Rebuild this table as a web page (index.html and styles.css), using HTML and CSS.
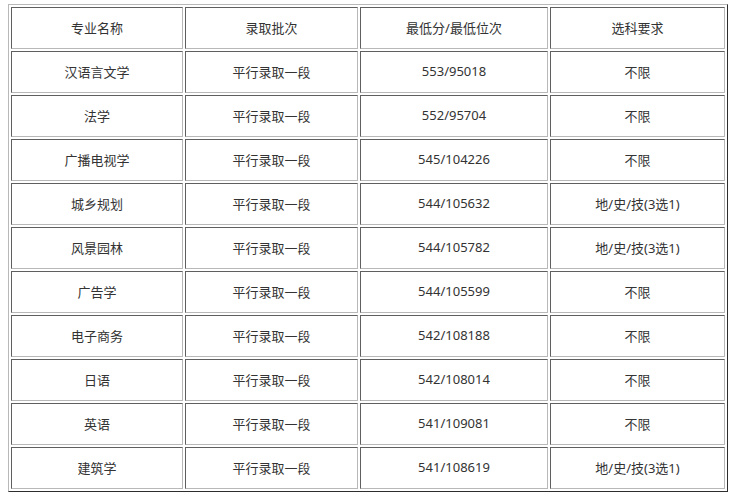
FILE: index.html
```html
<!DOCTYPE html>
<html lang="zh">
<head>
<meta charset="utf-8">
<link rel="stylesheet" href="styles.css">
</head>
<body>
<table class="grid">
  <colgroup>
    <col class="c1"><col class="c2"><col class="c3"><col class="c4">
  </colgroup>
  <tr><td>专业名称</td><td>录取批次</td><td>最低分/最低位次</td><td>选科要求</td></tr>
  <tr><td>汉语言文学</td><td>平行录取一段</td><td>553/95018</td><td>不限</td></tr>
  <tr><td>法学</td><td>平行录取一段</td><td>552/95704</td><td>不限</td></tr>
  <tr><td>广播电视学</td><td>平行录取一段</td><td>545/104226</td><td>不限</td></tr>
  <tr><td>城乡规划</td><td>平行录取一段</td><td>544/105632</td><td>地/史/技(3选1)</td></tr>
  <tr><td>风景园林</td><td>平行录取一段</td><td>544/105782</td><td>地/史/技(3选1)</td></tr>
  <tr><td>广告学</td><td>平行录取一段</td><td>544/105599</td><td>不限</td></tr>
  <tr><td>电子商务</td><td>平行录取一段</td><td>542/108188</td><td>不限</td></tr>
  <tr><td>日语</td><td>平行录取一段</td><td>542/108014</td><td>不限</td></tr>
  <tr><td>英语</td><td>平行录取一段</td><td>541/109081</td><td>不限</td></tr>
  <tr><td>建筑学</td><td>平行录取一段</td><td>541/108619</td><td>地/史/技(3选1)</td></tr>
</table>
</body>
</html>
```
FILE: styles.css
```css
html, body {
  background: #ffffff;
}
body {
  margin: 4px 8px;
  font-family: "Noto Sans", "Noto Sans CJK SC", sans-serif;
  font-size: 13px;
  color: #333333;
}
.grid {
  width: 720px;
  table-layout: fixed;
  border-collapse: separate;
  border-spacing: 2px;
  border-style: solid;
  border-width: 1px;
  border-color: #b8b8b8 #2e2e2e #2e2e2e #b8b8b8;
}
.c1 { width: 172px; }
.c2 { width: 173px; }
.c3 { width: 188px; }
.c4 { width: 175px; }
.grid td {
  box-sizing: border-box;
  height: 42px;
  padding: 0 0 2px 0;
  text-align: center;
  vertical-align: middle;
  border-style: solid;
  border-width: 1px;
  border-color: #5f5f5f #b8b8b8 #b8b8b8 #5f5f5f;
}
```
